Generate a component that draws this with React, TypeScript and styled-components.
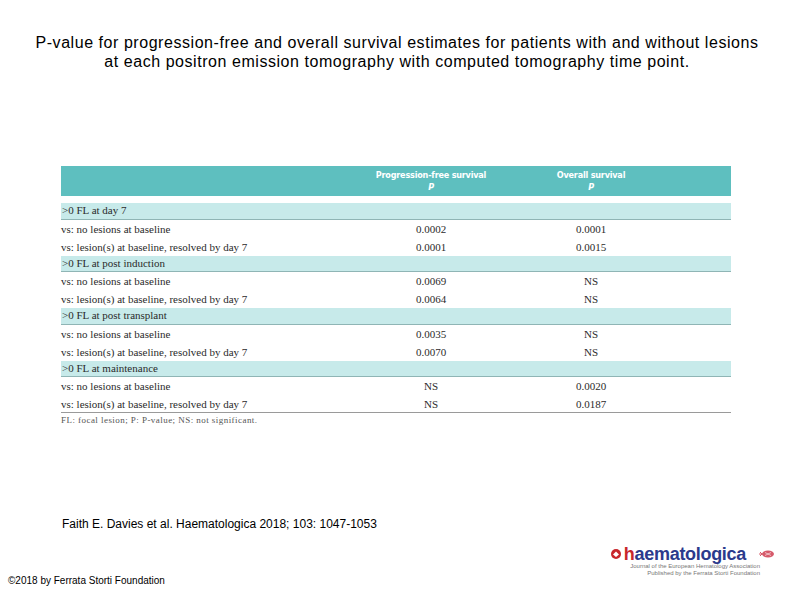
import React from "react";
import styled, { createGlobalStyle } from "styled-components";

interface Row {
  label: string;
  pfs: string;
  os: string;
}

interface Group {
  title: string;
  rows: Row[];
}

const groups: Group[] = [
  {
    title: ">0 FL at day 7",
    rows: [
      { label: "vs: no lesions at baseline", pfs: "0.0002", os: "0.0001" },
      { label: "vs: lesion(s) at baseline, resolved by day 7", pfs: "0.0001", os: "0.0015" },
    ],
  },
  {
    title: ">0 FL at post induction",
    rows: [
      { label: "vs: no lesions at baseline", pfs: "0.0069", os: "NS" },
      { label: "vs: lesion(s) at baseline, resolved by day 7", pfs: "0.0064", os: "NS" },
    ],
  },
  {
    title: ">0 FL at post transplant",
    rows: [
      { label: "vs: no lesions at baseline", pfs: "0.0035", os: "NS" },
      { label: "vs: lesion(s) at baseline, resolved by day 7", pfs: "0.0070", os: "NS" },
    ],
  },
  {
    title: ">0 FL at maintenance",
    rows: [
      { label: "vs: no lesions at baseline", pfs: "NS", os: "0.0020" },
      { label: "vs: lesion(s) at baseline, resolved by day 7", pfs: "NS", os: "0.0187" },
    ],
  },
];

const GlobalStyle = createGlobalStyle`
  html, body {
    margin: 0;
    padding: 0;
    background: #fff;
  }
  body {
    font-family: "Liberation Sans", Arial, sans-serif;
  }
`;

const Page = styled.div`
  width: 794px;
  height: 595px;
  display: flex;
  flex-direction: column;
  background: #fff;
  overflow: hidden;
`;

const Title = styled.h1`
  margin: 33px 0 0;
  font-size: 16px;
  font-weight: normal;
  line-height: 19px;
  letter-spacing: 0.55px;
  text-align: center;
  color: #000;
`;

const TableWrap = styled.div`
  margin: 95px 0 0 61px;
  width: 670px;
  font-family: "Liberation Serif", "Times New Roman", serif;
  font-size: 11px;
  color: #2b2b2b;
`;

const COLS = "300px 140px 180px 1fr";

const HeaderRow = styled.div`
  display: grid;
  grid-template-columns: ${COLS};
  height: 30px;
  align-items: center;
  background: #5ebfbf;
  color: #fff;
  font-family: "Liberation Sans Narrow", "DejaVu Sans Condensed", sans-serif;
  font-weight: bold;
  font-size: 9px;
  letter-spacing: -0.2px;
  line-height: 12px;
  margin-bottom: 7px;
`;

const HeadCell = styled.div`
  text-align: center;
  & i {
    display: block;
  }
`;

const GroupRow = styled.div`
  height: 15.5px;
  line-height: 15.5px;
  background: #c7eaea;
  border-bottom: 1px solid #8fb5b5;
  padding-left: 1px;
`;

const DataRow = styled.div<{ $last?: boolean }>`
  display: grid;
  grid-template-columns: ${COLS};
  height: ${(p) => (p.$last ? "17px" : "18px")};
  line-height: 18px;
  border-bottom: ${(p) => (p.$last ? "1px solid #9a9a9a" : "none")};
`;

const Label = styled.div`
  white-space: nowrap;
`;

const Val = styled.div`
  text-align: center;
`;

const Footnote = styled.div`
  margin: 2px 0 0 61px;
  font-family: "Liberation Serif", "Times New Roman", serif;
  font-size: 9px;
  letter-spacing: 0.45px;
  color: #555;
`;

const Citation = styled.div`
  margin: 92px 0 0 62px;
  font-size: 12px;
  color: #000;
`;

const Footer = styled.div`
  margin-top: 14px;
  display: flex;
  justify-content: space-between;
  align-items: flex-end;
`;

const Copyright = styled.div`
  margin: 0 0 6px 8px;
  font-size: 10px;
  color: #000;
`;

const Logo = styled.div`
  display: flex;
  align-items: flex-start;
  margin-right: 18px;
  margin-bottom: 16px;
`;

const LogoMain = styled.div`
  display: flex;
  flex-direction: column;
`;

const LogoWord = styled.div`
  display: flex;
  align-items: center;
  font-family: "Liberation Sans", Arial, sans-serif;
  font-weight: bold;
  font-size: 18px;
  line-height: 18px;
  letter-spacing: -0.3px;
  color: #2b3a8c;
  & b {
    color: #c8262b;
  }
`;

const LogoSub = styled.div`
  font-size: 6px;
  line-height: 6.5px;
  color: #777;
  text-align: right;
  margin-right: -14px;
`;

export default function App() {
  return (
    <Page>
      <GlobalStyle />
      <Title>
        P-value for progression-free and overall survival estimates for patients with and without lesions
        <br />
        at each positron emission tomography with computed tomography time point.
      </Title>
      <TableWrap>
        <HeaderRow>
          <div />
          <HeadCell>
            Progression-free survival<i>P</i>
          </HeadCell>
          <HeadCell>
            Overall survival<i>P</i>
          </HeadCell>
          <div />
        </HeaderRow>
        {groups.map((g, gi) => (
          <React.Fragment key={g.title}>
            <GroupRow>{g.title}</GroupRow>
            {g.rows.map((r, ri) => (
              <DataRow key={ri} $last={gi === groups.length - 1 && ri === g.rows.length - 1}>
                <Label>{r.label}</Label>
                <Val>{r.pfs}</Val>
                <Val>{r.os}</Val>
                <div />
              </DataRow>
            ))}
          </React.Fragment>
        ))}
      </TableWrap>
      <Footnote>FL: focal lesion; P: P-value; NS: not significant.</Footnote>
      <Citation>Faith E. Davies et al. Haematologica 2018; 103: 1047-1053</Citation>
      <Footer>
        <Copyright>©2018 by Ferrata Storti Foundation</Copyright>
        <Logo>
          <LogoMain>
            <LogoWord>
              <svg width="12" height="12" viewBox="0 0 12 12" style={{ marginRight: 2 }}>
                <circle cx="6" cy="6" r="5" fill="#c8262b" />
                <path d="M3 6.5 L6 3.5 L9 6.5 L6 9 Z" fill="#fff" />
              </svg>
              <b>h</b>aematologica
            </LogoWord>
            <LogoSub>
              Journal of the European Hematology Association
              <br />
              Published by the Ferrata Storti Foundation
            </LogoSub>
          </LogoMain>
          <svg width="18" height="10" viewBox="0 0 18 10" style={{ marginLeft: 12, marginTop: 4 }}>
            <ellipse cx="10" cy="5" rx="6" ry="3.5" fill="#d65a6a" />
            <path d="M1 5 H5 M2 3 L4 5 L2 7" stroke="#d65a6a" strokeWidth="1" fill="none" />
            <path d="M7 3.5 L13 6.5 M7 6.5 L13 3.5" stroke="#fff" strokeWidth="0.6" />
          </svg>
        </Logo>
      </Footer>
    </Page>
  );
}
